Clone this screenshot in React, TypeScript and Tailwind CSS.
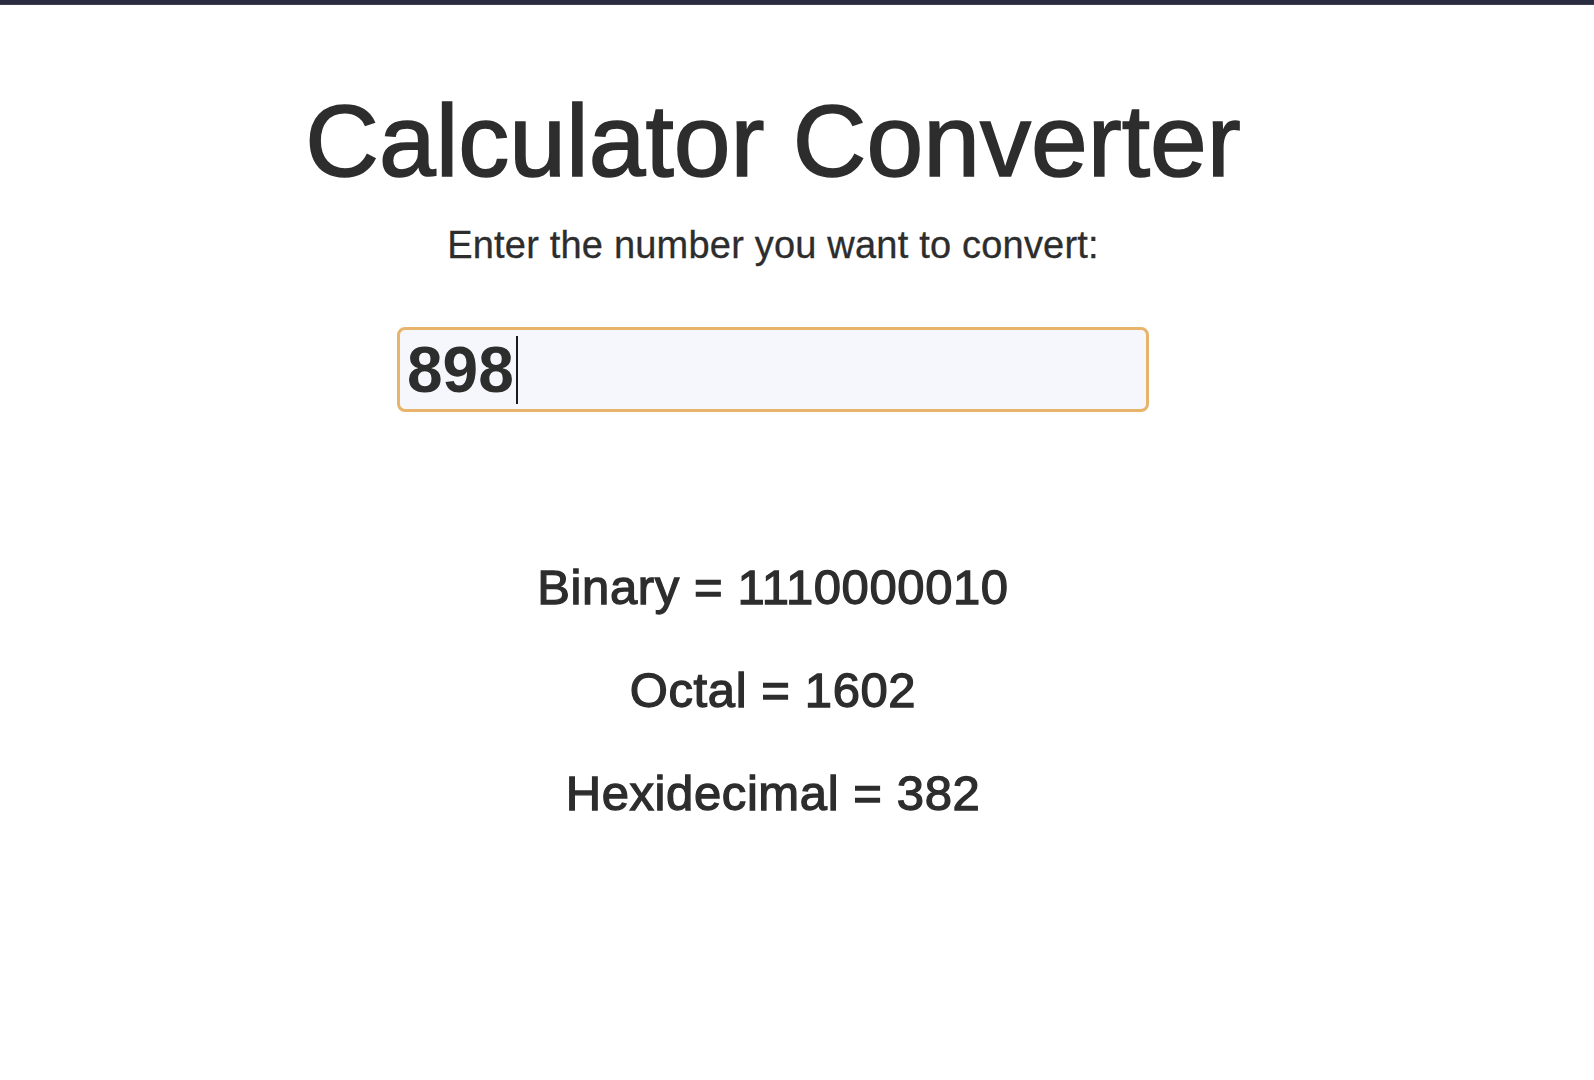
import { useState } from "react";

function toBase(value: string, base: number) {
  const n = parseInt(value, 10);
  if (Number.isNaN(n)) return "";
  return n.toString(base).toUpperCase();
}

export default function App() {
  const [value] = useState("898");

  const results = [
    { label: "Binary", value: toBase(value, 2) },
    { label: "Octal", value: toBase(value, 8) },
    { label: "Hexidecimal", value: toBase(value, 16) },
  ];

  return (
    <div className="min-h-screen bg-white font-['Liberation_Sans',Arial,sans-serif] text-[#2d2d2d]">
      <div className="h-[4px] bg-[#2a2d3f]" />
      <div className="h-[1px] bg-[#3d3f4e]" />

      <main className="flex flex-col items-center pr-[48px]">
        <h1 className="mt-[85px] text-[102px] leading-none [-webkit-text-stroke:1.6px_#2d2d2d]">
          Calculator Converter
        </h1>

        <p className="mt-[34px] text-[38px] leading-none tracking-[0.2px] [-webkit-text-stroke:0.3px_#2d2d2d]">
          Enter the number you want to convert:
        </p>

        <div className="mt-[63px] flex h-[85px] w-[752px] items-center rounded-[8px] border-[3px] border-[#e8b36b] bg-[#f6f7fc] pl-[7px]">
          <span className="text-[64px] font-bold leading-none">{value}</span>
          <span className="ml-[2px] h-[68px] w-[2px] bg-[#1a1a1a]" />
        </div>

        <div className="mt-[151px] flex flex-col items-center gap-[54px]">
          {results.map((r) => (
            <p
              key={r.label}
              className="text-[49px] leading-none tracking-[0.6px] [-webkit-text-stroke:1.3px_#2d2d2d]"
            >
              {r.label} = {r.value}
            </p>
          ))}
        </div>
      </main>
    </div>
  );
}
